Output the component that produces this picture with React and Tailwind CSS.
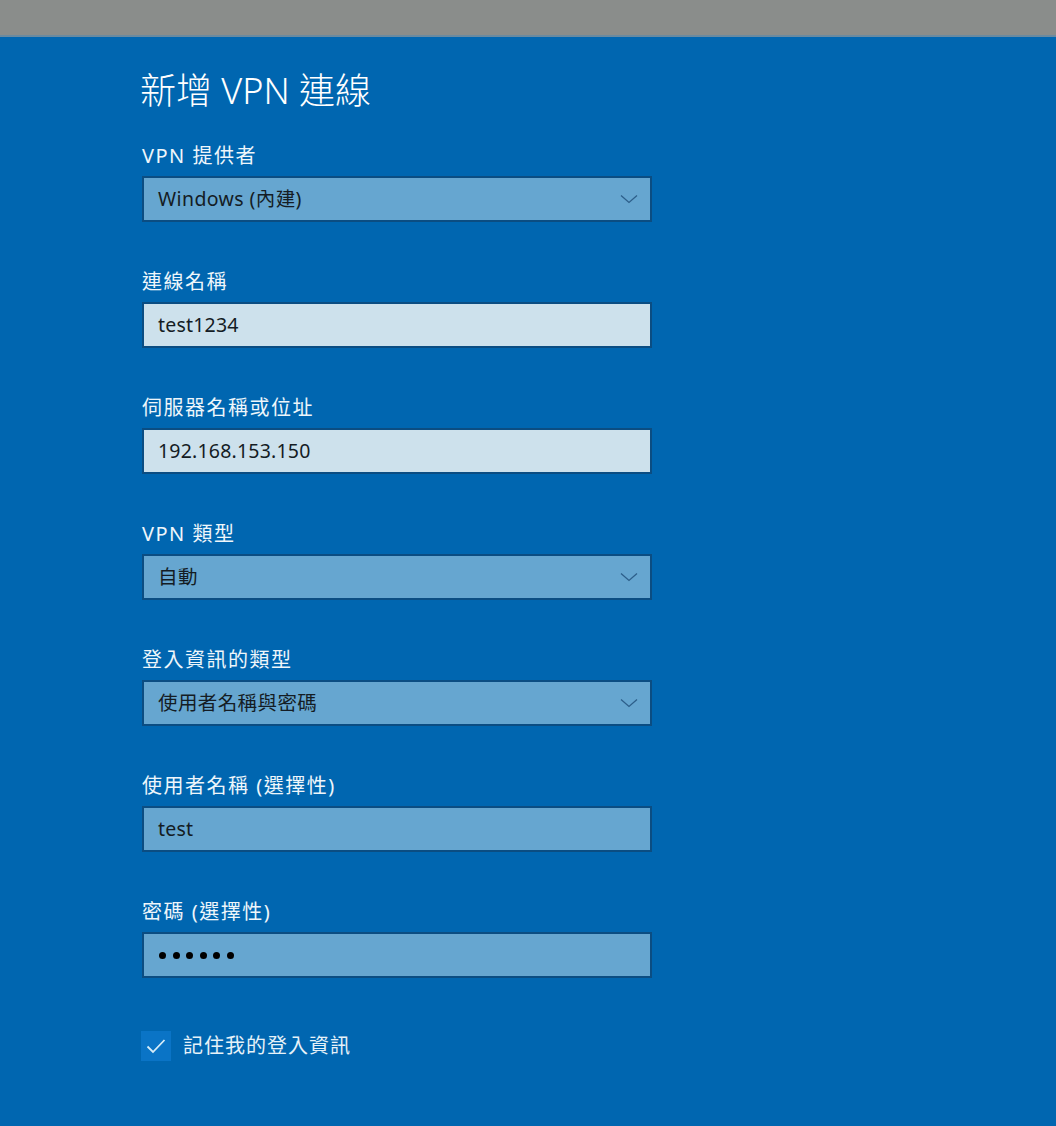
import React from "react";

const font = {
  fontFamily: '"Noto Sans", "Noto Sans CJK TC", sans-serif',
};

const Chevron = () => (
  <svg width="18" height="10" viewBox="0 0 18 10" fill="none">
    <path d="M1 1.5 L9 8.5 L17 1.5" stroke="#2d5f8a" strokeWidth="1.3" />
  </svg>
);

const Field = ({ label, children }) => (
  <div className="flex flex-col">
    <label className="h-[28px] text-[20px] leading-[28px] tracking-[1.5px] text-[#eef6fb]">
      {label}
    </label>
    <div className="mt-[6px]">{children}</div>
  </div>
);

const Select = ({ value }) => (
  <div className="flex h-[46px] w-[510px] items-center justify-between border-2 border-[#0b4d82] bg-[#66a6d0] pl-[14px] pr-[12px]">
    <span className="text-[19.5px] tracking-[0.4px] text-[#141c24]">{value}</span>
    <Chevron />
  </div>
);

const TextBox = ({ value, light }) => (
  <div
    className={
      light
        ? "flex h-[46px] w-[510px] items-center border-2 border-[#0b4d82] bg-[#cde1ec] pl-[14px]"
        : "flex h-[46px] w-[510px] items-center border-2 border-[#0b4d82] bg-[#66a6d0] pl-[14px]"
    }
  >
    <span className="text-[19.5px] tracking-[0.2px] text-[#141c24]">{value}</span>
  </div>
);

const PasswordBox = () => (
  <div className="flex h-[46px] w-[510px] items-center gap-[6.5px] border-2 border-[#0b4d82] bg-[#66a6d0] pl-[15px]">
    {[0, 1, 2, 3, 4, 5].map((i) => (
      <span key={i} className="h-[7px] w-[7px] rounded-full bg-black" />
    ))}
  </div>
);

export default function App() {
  return (
    <div className="min-h-[1126px] w-full bg-[#0066b0]" style={font}>
      <div className="h-[37px] border-b-2 border-[#6a8aa0] bg-[#8a8d8b]" />
      <div className="flex flex-col pl-[142px] pt-[30px]">
        <h1 className="-ml-[2px] h-[48px] text-[36px] font-light leading-[48px] text-white">
          新增 VPN 連線
        </h1>
        <div className="mt-[27px] flex flex-col gap-[46px]">
          <Field label="VPN 提供者">
            <Select value="Windows (內建)" />
          </Field>
          <Field label="連線名稱">
            <TextBox value="test1234" light />
          </Field>
          <Field label="伺服器名稱或位址">
            <TextBox value="192.168.153.150" light />
          </Field>
          <Field label="VPN 類型">
            <Select value="自動" />
          </Field>
          <Field label="登入資訊的類型">
            <Select value="使用者名稱與密碼" />
          </Field>
          <Field label="使用者名稱 (選擇性)">
            <TextBox value="test" />
          </Field>
          <Field label="密碼 (選擇性)">
            <PasswordBox />
          </Field>
        </div>
        <div className="-ml-[1px] mt-[53px] flex items-center gap-[12px]">
          <div className="flex h-[30px] w-[30px] items-center justify-center bg-[#0a74c6]">
            <svg width="20" height="16" viewBox="0 0 20 16" fill="none">
              <path d="M1.5 8.5 L7 14 L18.5 2" stroke="#d6ecf8" strokeWidth="1.8" />
            </svg>
          </div>
          <span className="text-[20px] tracking-[1px] text-[#e6f2f9]">記住我的登入資訊</span>
        </div>
      </div>
    </div>
  );
}
